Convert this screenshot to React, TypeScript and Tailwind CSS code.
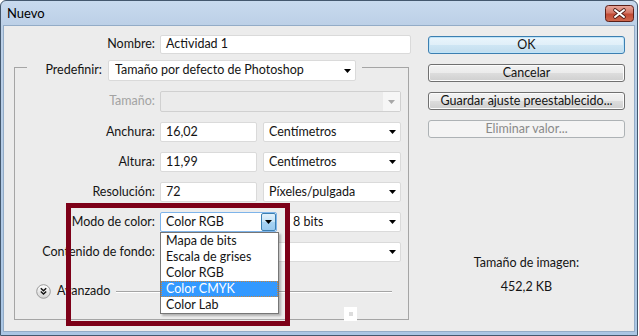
import type { ReactNode } from "react"

function Tri({ color = "#000" }: { color?: string }) {
  return (
    <svg width="7" height="4" viewBox="0 0 7 4" className="shrink-0">
      <path d="M0 0h7L3.5 4z" fill={color} />
    </svg>
  )
}

function Select({ value, className = "" }: { value: string; className?: string }) {
  return (
    <div
      className={`bg-white border border-[#dadada] rounded-[2px] pl-[5px] pr-[4px] flex items-center justify-between ${className}`}
    >
      <span className="truncate">{value}</span>
      <Tri />
    </div>
  )
}

function Input({ value, className = "" }: { value: string; className?: string }) {
  return (
    <div className={`bg-white border border-[#dadada] rounded-[2px] pl-[5px] flex items-center ${className}`}>
      {value}
    </div>
  )
}

function Row({
  label,
  disabled,
  className = "",
  children,
}: {
  label: string
  disabled?: boolean
  className?: string
  children: ReactNode
}) {
  return (
    <div className={`flex items-center ${className}`}>
      <span className={`w-[140px] text-right whitespace-nowrap ${disabled ? "text-[#a3a3a3]" : ""}`}>{label}</span>
      <div className="ml-[5px] flex items-center">{children}</div>
    </div>
  )
}

function Button({
  children,
  primary,
  disabled,
  className = "",
}: {
  children: ReactNode
  primary?: boolean
  disabled?: boolean
  className?: string
}) {
  const look = primary
    ? "border-[#3c7fb1] bg-[linear-gradient(#eaf5fc,#e0eff8_50%,#cfe6f4_50%,#c2ddee)] shadow-[inset_0_0_0_1px_#bfe4f8]"
    : disabled
      ? "border-[#adb2b5] bg-[#f4f4f4] text-[#8a8a8a]"
      : "border-[#707070] bg-[linear-gradient(#f2f2f2,#ebebeb_50%,#dddddd_50%,#cfcfcf)] shadow-[inset_0_0_0_1px_#fcfcfc]"
  return (
    <div className={`h-[18px] rounded-[3px] border flex items-center justify-center leading-none ${look} ${className}`}>
      {children}
    </div>
  )
}

function CloseButton() {
  return (
    <svg width="29" height="17" viewBox="0 0 29 17" className="mt-[4px] mr-[3px]">
      <defs>
        <linearGradient id="cb" x1="0" y1="0" x2="0" y2="1">
          <stop offset="0" stopColor="#e9a99e" />
          <stop offset="0.45" stopColor="#d47867" />
          <stop offset="0.55" stopColor="#c24b36" />
          <stop offset="1" stopColor="#cf6a4f" />
        </linearGradient>
      </defs>
      <rect x="0.5" y="0.5" width="28" height="16" rx="3" fill="url(#cb)" stroke="#5b1f18" />
      <path d="M10 5l9 7M19 5l-9 7" stroke="#4a1a14" strokeWidth="3.6" strokeLinecap="round" />
      <path d="M10 5l9 7M19 5l-9 7" stroke="#fff" strokeWidth="2" strokeLinecap="round" />
    </svg>
  )
}

function AdvancedIcon() {
  return (
    <svg width="15" height="15" viewBox="0 0 15 15" className="shrink-0">
      <defs>
        <linearGradient id="adv" x1="0" y1="0" x2="0" y2="1">
          <stop offset="0" stopColor="#ffffff" />
          <stop offset="1" stopColor="#d2d2d2" />
        </linearGradient>
      </defs>
      <circle cx="7.5" cy="7.5" r="6.8" fill="url(#adv)" stroke="#9a9a9a" />
      <path d="M4.8 4.3l2.7 2.5 2.7-2.5M4.8 7.6l2.7 2.5 2.7-2.5" fill="none" stroke="#111" strokeWidth="1.4" />
    </svg>
  )
}

const modes = ["Mapa de bits", "Escala de grises", "Color RGB", "Color CMYK", "Color Lab"]

export default function App() {
  return (
    <div className="relative w-[639px] h-[336px] overflow-hidden bg-white font-['Lato',sans-serif] text-[12.5px] text-[#141414]">
      <div className="w-[638px] h-[336px] flex flex-col border border-[#44586e] rounded-t-[6px] bg-[linear-gradient(#c8daee,#bcd0e7_24px,#aac6e4)]">
        <div className="h-[24px] shrink-0 flex items-start justify-between">
          <span className="pl-[6px] pt-[4px] leading-[16px] text-[13px] text-black">Nuevo</span>
          <CloseButton />
        </div>
        <div className="flex-1 mx-[2px] mb-[3px] flex bg-[#ececec] border border-[#93acc7]">
          <div className="w-[424px] pt-[9px]">
            <div className="flex items-center">
              <span className="w-[151px] text-right">Nombre:</span>
              <Input value="Actividad 1" className="ml-[5px] w-[251px] h-[19px]" />
            </div>
            <fieldset className="ml-[10px] w-[395px] border border-[#a5a5a5] pb-[20px]">
              <legend className="ml-[12px] pt-[6px] pr-[6px]">
                <div className="flex items-center">
                  <span className="w-[75px] text-right">Predefinir:</span>
                  <Select
                    value="Tamaño por defecto de Photoshop"
                    className="ml-[6px] w-[248px] h-[21px] pl-[6px]"
                  />
                </div>
              </legend>
              <Row label="Tamaño:" disabled className="mt-[10px]">
                <div className="w-[241px] h-[21px] flex border border-[#d0d0d0] rounded-[2px] bg-[#ebebeb]">
                  <div className="flex-1" />
                  <div className="w-[17px] bg-[#f6f6f6] flex items-center justify-center">
                    <Tri color="#a8a8a8" />
                  </div>
                </div>
              </Row>
              <Row label="Anchura:" className="mt-[10px]">
                <Input value="16,02" className="w-[97px] h-[20px]" />
                <Select value="Centímetros" className="ml-[6px] w-[138px] h-[20px]" />
              </Row>
              <Row label="Altura:" className="mt-[10px]">
                <Input value="11,99" className="w-[97px] h-[20px]" />
                <Select value="Centímetros" className="ml-[6px] w-[138px] h-[20px]" />
              </Row>
              <Row label="Resolución:" className="mt-[10px]">
                <Input value="72" className="w-[97px] h-[20px]" />
                <Select value="Píxeles/pulgada" className="ml-[6px] w-[138px] h-[20px]" />
              </Row>
              <Row label="Modo de color:" className="mt-[10px]">
                <div className="relative w-[117px] h-[20px] flex items-center bg-white border border-[#7eb4ea] rounded-[2px] pl-[5px]">
                  <span className="flex-1">Color RGB</span>
                  <div className="w-[15px] h-[18px] flex items-center justify-center border border-[#3c7fb1] rounded-[2px] bg-[linear-gradient(#e3f1fb,#c4e2f7_50%,#a7d3f3_50%,#99c9ef)]">
                    <Tri />
                  </div>
                  <div className="absolute z-10 left-[-1px] top-[19px] w-[119px] bg-white border border-[#767676] shadow-[2px_2px_2px_rgba(0,0,0,0.25)] flex flex-col">
                    {modes.map(m => (
                      <div
                        key={m}
                        className={`h-[16px] leading-[14px] pl-[4px] border whitespace-nowrap ${
                          m === "Color CMYK"
                            ? "bg-[#3399ff] text-white border-dotted border-[#c8843c]"
                            : "border-transparent"
                        }`}
                      >
                        {m}
                      </div>
                    ))}
                  </div>
                </div>
                <Select value="8 bits" className="ml-[10px] w-[114px] h-[20px]" />
              </Row>
              <Row label="Contenido de fondo:" className="mt-[10px]">
                <Select value="" className="w-[241px] h-[20px]" />
              </Row>
              <div className="relative mt-[22px] h-[15px] flex items-center pl-[21px] pr-[16px]">
                <AdvancedIcon />
                <span className="ml-[6px]">Avanzado</span>
                <div className="flex-1 ml-[6px] h-[2px] border-t border-[#a5a5a5] border-b border-b-white" />
                <div className="absolute left-[329px] top-[23px] w-[13px] h-[14px] bg-white flex items-center justify-center">
                  <div className="w-[4px] h-[4px] bg-[#dcdcdc]" />
                </div>
              </div>
            </fieldset>
          </div>
          <div className="w-[197px] pt-[10px] flex flex-col">
            <Button primary>OK</Button>
            <Button className="mt-[10px]">Cancelar</Button>
            <Button className="mt-[10px]">Guardar ajuste preestablecido...</Button>
            <Button className="mt-[10px]" disabled>
              Eliminar valor...
            </Button>
            <div className="mt-[117px] text-center leading-[16px]">Tamaño de imagen:</div>
            <div className="mt-[8px] text-center leading-[16px]">452,2 KB</div>
          </div>
        </div>
      </div>
      <div className="absolute left-[66px] top-[203px] w-[224px] h-[123px] border-[5px] border-[#7d0018] pointer-events-none" />
    </div>
  )
}
